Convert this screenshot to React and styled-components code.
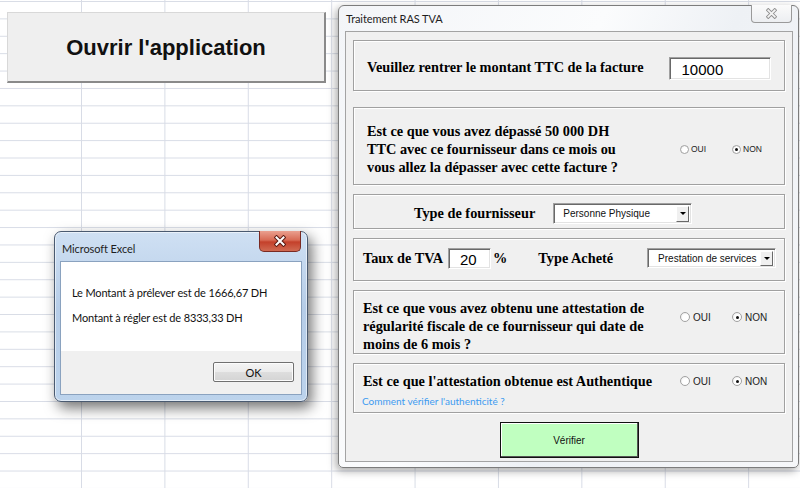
import React from "react";
import styled, { createGlobalStyle } from "styled-components";

const GlobalStyle = createGlobalStyle`
  html, body { margin: 0; padding: 0; background: #fff; }
  body { width: 800px; height: 488px; overflow: hidden; }
`;

const Sheet = styled.div`
  position: relative;
  width: 800px;
  height: 488px;
  overflow: hidden;
  background-color: #fff;
  background-image:
    linear-gradient(to right, #d8dce6 1px, transparent 1px),
    linear-gradient(to bottom, #d8dce6 1px, transparent 1px);
  background-size: 83.4px 100%, 100% 17.4px;
  background-position: -2.4px 0, 0 1px;
`;

const ShapeButton = styled.div`
  position: absolute;
  left: 7px;
  top: 12px;
  width: 319px;
  height: 71px;
  box-sizing: border-box;
  background: #efefef;
  border-top: 1px solid #d8d8d8;
  border-left: 1px solid #d8d8d8;
  border-right: 2px solid #8a8a8a;
  border-bottom: 2px solid #8a8a8a;
  display: flex;
  align-items: center;
  justify-content: center;
  padding-top: 2px;
  font: bold 22px "Liberation Sans", Arial, sans-serif;
  color: #111;
`;

/* ---------- Message box ---------- */
const MsgWindow = styled.div`
  position: absolute;
  left: 54px;
  top: 231px;
  width: 254px;
  height: 171px;
  box-sizing: border-box;
  border: 1px solid #4a5a70;
  border-radius: 7px;
  background: linear-gradient(#cfe0f3, #b6cde8 45%, #bcd3ec);
  box-shadow: 4px 6px 14px rgba(0, 0, 0, 0.55), inset 0 0 0 1px rgba(255, 255, 255, 0.55);
  display: flex;
  flex-direction: column;
  padding: 0 5px 6px;
`;

const TitleBar = styled.div`
  height: ${(p) => p.$h}px;
  flex: none;
  display: flex;
  align-items: flex-start;
  padding-left: ${(p) => p.$pl}px;
`;

const TitleText = styled.span`
  font: 11px Lato, "Liberation Sans", sans-serif;
  letter-spacing: -0.1px;
  line-height: 14px;
  color: #1e1e1e;
  margin-top: ${(p) => p.$mt}px;
`;

const RedClose = styled.div`
  margin-left: auto;
  margin-top: -1px;
  margin-right: 1px;
  width: 42px;
  height: 21px;
  box-sizing: border-box;
  border: 1px solid #7a2a22;
  border-top: none;
  border-radius: 0 0 5px 5px;
  background: linear-gradient(#eaa08f, #d86b55 45%, #c4402a 55%, #d06a52);
  display: flex;
  align-items: center;
  justify-content: center;
`;

const LightClose = styled.div`
  margin-left: auto;
  margin-top: -1px;
  margin-right: 1px;
  width: 41px;
  height: 18px;
  box-sizing: border-box;
  border: 1px solid #9a9a9a;
  border-top: none;
  border-radius: 0 0 4px 4px;
  background: linear-gradient(#fbfbfb, #eceef1);
  display: flex;
  align-items: center;
  justify-content: center;
`;

const MsgClient = styled.div`
  flex: 1;
  display: flex;
  flex-direction: column;
  border: 1px solid #8aa2bf;
  background: #f0f0f0;
`;

const MsgBody = styled.div`
  height: 89px;
  background: #fff;
  box-sizing: border-box;
  padding: 23px 0 0 11px;
  display: flex;
  flex-direction: column;
  gap: 9px;
`;

const MsgLine = styled.div`
  font: 11px Lato, "Liberation Sans", sans-serif;
  letter-spacing: -0.15px;
  line-height: 16px;
  color: #111;
`;

const MsgFooter = styled.div`
  flex: 1;
  display: flex;
  justify-content: flex-end;
  align-items: flex-start;
  padding: 11px 7px 0 0;
`;

const OkButton = styled.div`
  width: 81px;
  height: 20px;
  box-sizing: border-box;
  border: 1px solid #707070;
  border-radius: 2px;
  background: linear-gradient(#f4f4f4, #ebebeb 50%, #dedede 50%, #d4d4d4);
  box-shadow: inset 0 0 0 1px #fcfcfc;
  display: flex;
  align-items: center;
  justify-content: center;
  font: 11px Lato, "Liberation Sans", sans-serif;
  color: #111;
`;

/* ---------- User form ---------- */
const FormWindow = styled.div`
  position: absolute;
  left: 338px;
  top: 5px;
  width: 461px;
  height: 463px;
  box-sizing: border-box;
  border: 1px solid #7c7c7c;
  border-radius: 6px 6px 5px 5px;
  background: linear-gradient(115deg, #f3f5f8 0%, #fbfcfd 40%, #eef1f5 60%, #f6f7f9 100%);
  box-shadow: -2px 3px 8px rgba(0, 0, 0, 0.35);
  display: flex;
  flex-direction: column;
  padding: 0 5px 5px 6px;
`;

const Client = styled.div`
  flex: 1;
  box-sizing: border-box;
  border: 1px solid #a3a3a3;
  background: #f0f0f0;
  display: flex;
  flex-direction: column;
  gap: 9px;
  padding: 8px 7px 3px;
`;

const Frame = styled.div`
  box-sizing: border-box;
  height: ${(p) => p.$h}px;
  flex: none;
  border: 1px solid #a0a0a0;
  box-shadow: inset 1px 1px 0 #fff, 1px 1px 0 #fff;
  display: flex;
  align-items: ${(p) => p.$align || "center"};
  padding: ${(p) => p.$pad || "0"};
  margin-top: ${(p) => p.$mt || 0}px;
`;

const Label = styled.div`
  font-family: "Liberation Serif", "Times New Roman", serif;
  font-weight: bold;
  font-size: 14.3px;
  line-height: 18px;
  color: #000;
  white-space: nowrap;
  margin-left: ${(p) => p.$ml || 0}px;
`;

const Column = styled.div`
  display: flex;
  flex-direction: column;
`;

const TextBox = styled.div`
  box-sizing: border-box;
  width: ${(p) => p.$w}px;
  height: ${(p) => p.$h}px;
  background: #fff;
  border: 1px solid;
  border-color: #a0a0a0 #fff #fff #a0a0a0;
  box-shadow: inset 1px 1px 0 #696969, inset -1px -1px 0 #e3e3e3;
  font: 15px "Liberation Sans", Arial, sans-serif;
  color: #000;
  display: flex;
  align-items: center;
  padding: 2px 0 0 ${(p) => p.$pl}px;
  margin-left: ${(p) => p.$ml || 0}px;
  margin-top: ${(p) => p.$mt || 0}px;
`;

const Combo = styled.div`
  box-sizing: border-box;
  width: ${(p) => p.$w}px;
  height: ${(p) => p.$h}px;
  background: #fff;
  border: 1px solid;
  border-color: #a0a0a0 #fff #fff #a0a0a0;
  box-shadow: inset 1px 1px 0 #696969, inset -1px -1px 0 #e3e3e3;
  display: flex;
  align-items: center;
  justify-content: space-between;
  padding: 2px 2px 1px ${(p) => p.$pl}px;
  margin-left: ${(p) => p.$ml || 0}px;
  font: 10px "Liberation Sans", Arial, sans-serif;
  color: #111;
`;

const DropButton = styled.span`
  width: 13px;
  align-self: stretch;
  box-sizing: border-box;
  background: #f0f0f0;
  border: 1px solid;
  border-color: #fff #696969 #696969 #fff;
  display: flex;
  align-items: center;
  justify-content: center;
  &::after {
    content: "";
    border-left: 3px solid transparent;
    border-right: 3px solid transparent;
    border-top: 3px solid #000;
  }
`;

const RadioGroup = styled.div`
  margin-left: auto;
  width: 104px;
  display: grid;
  grid-template-columns: 52px 52px;
  align-items: center;
  height: ${(p) => p.$h || 14}px;
  margin-top: ${(p) => p.$mt || 0}px;
`;

const Radio = styled.span`
  display: flex;
  align-items: center;
  gap: ${(p) => (p.$small ? 2 : 3)}px;
  font-family: "Liberation Sans", Tahoma, sans-serif;
  font-size: ${(p) => (p.$small ? 8.5 : 10)}px;
  color: #222;
`;

const RadioCircle = styled.span`
  box-sizing: border-box;
  width: ${(p) => (p.$small ? 9 : 10)}px;
  height: ${(p) => (p.$small ? 9 : 10)}px;
  border-radius: 50%;
  border: 1px solid #a2a2a2;
  background: radial-gradient(circle at 60% 60%, #fff 45%, #e2e2e2);
  display: inline-flex;
  align-items: center;
  justify-content: center;
  &::after {
    content: "";
    width: 3px;
    height: 3px;
    border-radius: 50%;
    background: ${(p) => (p.$on ? "#111" : "transparent")};
  }
`;

const Link = styled.div`
  font: 10px Lato, "Liberation Sans", sans-serif;
  line-height: 14px;
  color: #3d9bf0;
  margin: 4px 0 0 -1px;
`;

const ButtonRow = styled.div`
  display: flex;
  justify-content: center;
`;

const VerifyButton = styled.div`
  width: 139px;
  height: 36px;
  box-sizing: border-box;
  background: #c0ffc0;
  border: 1px solid #111;
  box-shadow: inset -1px -1px 0 #555, inset 1px 1px 0 #fff;
  display: flex;
  align-items: center;
  justify-content: center;
  font: 10px "Liberation Sans", Tahoma, sans-serif;
  color: #111;
`;

function CloseGlyph({ outer, inner, size }) {
  return (
    <svg width={size} height={size} viewBox="0 0 12 12">
      <path d="M2.5 2.5 L9.5 9.5 M9.5 2.5 L2.5 9.5" stroke={outer} strokeWidth="4" strokeLinecap="square" fill="none" />
      <path d="M2.5 2.5 L9.5 9.5 M9.5 2.5 L2.5 9.5" stroke={inner} strokeWidth="2" strokeLinecap="square" fill="none" />
    </svg>
  );
}

function YesNo({ small, h, mt }) {
  return (
    <RadioGroup $h={h} $mt={mt}>
      <Radio $small={small}>
        <RadioCircle $small={small} />
        OUI
      </Radio>
      <Radio $small={small}>
        <RadioCircle $small={small} $on />
        NON
      </Radio>
    </RadioGroup>
  );
}

export default function App() {
  return (
    <>
      <GlobalStyle />
      <Sheet>
        <ShapeButton>Ouvrir l'application</ShapeButton>

        <FormWindow>
          <TitleBar $h={25} $pl={1}>
            <TitleText $mt={6}>Traitement RAS TVA</TitleText>
            <LightClose>
              <CloseGlyph outer="#8f8f8f" inner="#f4f4f4" size={11} />
            </LightClose>
          </TitleBar>
          <Client>
            <Frame $h={51} $pad="3px 12px 0 13px">
              <Label>Veuillez rentrer le montant TTC de la facture</Label>
              <TextBox $w={102} $h={23} $pl={12} $ml={25} $mt={3}>
                10000
              </TextBox>
            </Frame>

            <Frame $h={78} $mt={7} $pad="6px 0 0 13px">
              <Label>
                Est ce que vous avez dépassé 50 000 DH
                <br />
                TTC avec ce fournisseur dans ce mois ou
                <br />
                vous allez la dépasser avec cette facture ?
              </Label>
              <YesNo small />
            </Frame>

            <Frame $h={35} $pad="3px 0 0 60px">
              <Label>Type de fournisseur</Label>
              <Combo $w={139} $h={21} $pl={9} $ml={18}>
                Personne Physique
                <DropButton />
              </Combo>
            </Frame>

            <Frame $h={43} $pad="0 0 3px 9px">
              <Label>Taux de TVA</Label>
              <TextBox $w={43} $h={21} $pl={11} $ml={5}>
                20
              </TextBox>
              <Label $ml={2}>%</Label>
              <Label $ml={31}>Type Acheté</Label>
              <Combo $w={129} $h={20} $pl={10} $ml={34}>
                Prestation de services
                <DropButton />
              </Combo>
            </Frame>

            <Frame $h={64} $align="flex-start" $pad="8px 0 0 9px">
              <Label>
                Est ce que vous avez obtenu une attestation de
                <br />
                régularité fiscale de ce fournisseur qui date de
                <br />
                moins de 6 mois ?
              </Label>
              <YesNo h={14} mt={11} />
            </Frame>

            <Frame $h={50} $align="flex-start" $pad="8px 0 0 9px">
              <Column>
                <Label>Est ce que l'attestation obtenue est Authentique</Label>
                <Link>Comment vérifier l'authenticité ?</Link>
              </Column>
              <YesNo h={18} />
            </Frame>

            <ButtonRow>
              <VerifyButton>Vérifier</VerifyButton>
            </ButtonRow>
          </Client>
        </FormWindow>

        <MsgWindow>
          <TitleBar $h={29} $pl={2}>
            <TitleText $mt={10}>Microsoft Excel</TitleText>
            <RedClose>
              <CloseGlyph outer="#5a1a12" inner="#ffffff" size={12} />
            </RedClose>
          </TitleBar>
          <MsgClient>
            <MsgBody>
              <MsgLine>Le Montant à prélever est de 1666,67 DH</MsgLine>
              <MsgLine>Montant à régler est de 8333,33 DH</MsgLine>
            </MsgBody>
            <MsgFooter>
              <OkButton>OK</OkButton>
            </MsgFooter>
          </MsgClient>
        </MsgWindow>
      </Sheet>
    </>
  );
}
